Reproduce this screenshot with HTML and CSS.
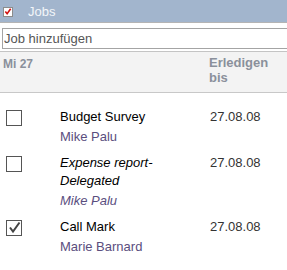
FILE: index.html
```html
<!DOCTYPE html>
<html lang="de">
<head>
    <meta charset="UTF-8">
    <title>Jobs</title>
    <link rel="stylesheet" href="styles.css">
</head>
<body>
    <div class="panel">
        <div class="titlebar">
            <span class="title-check">
                <svg width="9" height="9" viewBox="0 0 9 9"><path d="M1.5 4.5 L3.5 7 L7.5 1.5" fill="none" stroke="#d01010" stroke-width="1.8"/></svg>
            </span>
            <span class="title">Jobs</span>
        </div>
        <div class="add-row">
            <input class="add-input" type="text" value="Job hinzufügen">
        </div>
        <div class="head">
            <div class="col-day">Mi 27</div>
            <div class="col-due">Erledigen bis</div>
        </div>
        <div class="jobs">
            <div class="job">
                <span class="box"></span>
                <div class="info">
                    <div class="name">Budget Survey</div>
                    <div class="who">Mike Palu</div>
                </div>
                <div class="date">27.08.08</div>
            </div>
            <div class="job delegated">
                <span class="box"></span>
                <div class="info">
                    <div class="name">Expense report-Delegated</div>
                    <div class="who">Mike Palu</div>
                </div>
                <div class="date">27.08.08</div>
            </div>
            <div class="job">
                <span class="box checked">
                    <svg width="15" height="15" viewBox="0 0 15 15"><path d="M3 7.5 L6 11.5 L12.5 2.5" fill="none" stroke="#444" stroke-width="2"/></svg>
                </span>
                <div class="info">
                    <div class="name">Call Mark</div>
                    <div class="who">Marie Barnard</div>
                </div>
                <div class="date">27.08.08</div>
            </div>
        </div>
    </div>
</body>
</html>
```

FILE: styles.css
```css
body {
    margin: 0;
    background: #fff;
    font-family: "Liberation Sans", Arial, sans-serif;
    font-size: 13px;
    color: #000;
}
.panel {
    width: 287px;
    height: 270px;
    overflow: hidden;
}
.titlebar {
    height: 22px;
    background: #a2b5cd;
    border-bottom: 1px solid #b4b4b4;
    display: flex;
    align-items: center;
}
.title-check {
    width: 8px;
    height: 8px;
    margin-left: 3px;
    margin-top: 2px;
    background: #fff;
    border: 1px solid #8c8c8c;
    display: flex;
}
.title-check svg {
    margin: -1px 0 0 0;
}
.title {
    margin-left: 15px;
    color: #f2f5f9;
    font-size: 13px;
}
.add-row {
    padding: 5px 0 2px 2px;
    border-bottom: 1px solid #c4c4c4;
}
.add-input {
    display: block;
    box-sizing: border-box;
    width: 300px;
    height: 21px;
    margin: 0;
    padding: 0 0 0 1px;
    border: 1px solid #a4a4a4;
    font-family: "Liberation Sans", Arial, sans-serif;
    font-size: 13px;
    color: #555;
    outline: none;
}
.head {
    background: #f3f3f3;
    height: 40px;
    border-bottom: 1px solid #c8c8c8;
    display: flex;
    color: #8a909b;
    font-weight: bold;
    font-size: 12px;
    line-height: 16px;
}
.col-day {
    padding: 4px 0 0 3px;
    width: 206px;
}
.col-due {
    padding: 3px 0 0 0;
    width: 75px;
    font-size: 13px;
    line-height: 15px;
}
.jobs {
    padding-top: 11px;
}
.job {
    display: grid;
    grid-template-columns: 60px 150px 1fr;
    padding: 4px 0;
    line-height: 18px;
}
.box {
    width: 14px;
    height: 14px;
    margin: 2px 0 0 6px;
    border: 1px solid #555;
    position: relative;
}
.box svg {
    position: absolute;
    left: 0;
    top: -1px;
}
.who {
    margin-top: 2px;
    color: #5a4e7e;
}
.delegated .info {
    font-style: italic;
}
.date {
    color: #333;
}
```
